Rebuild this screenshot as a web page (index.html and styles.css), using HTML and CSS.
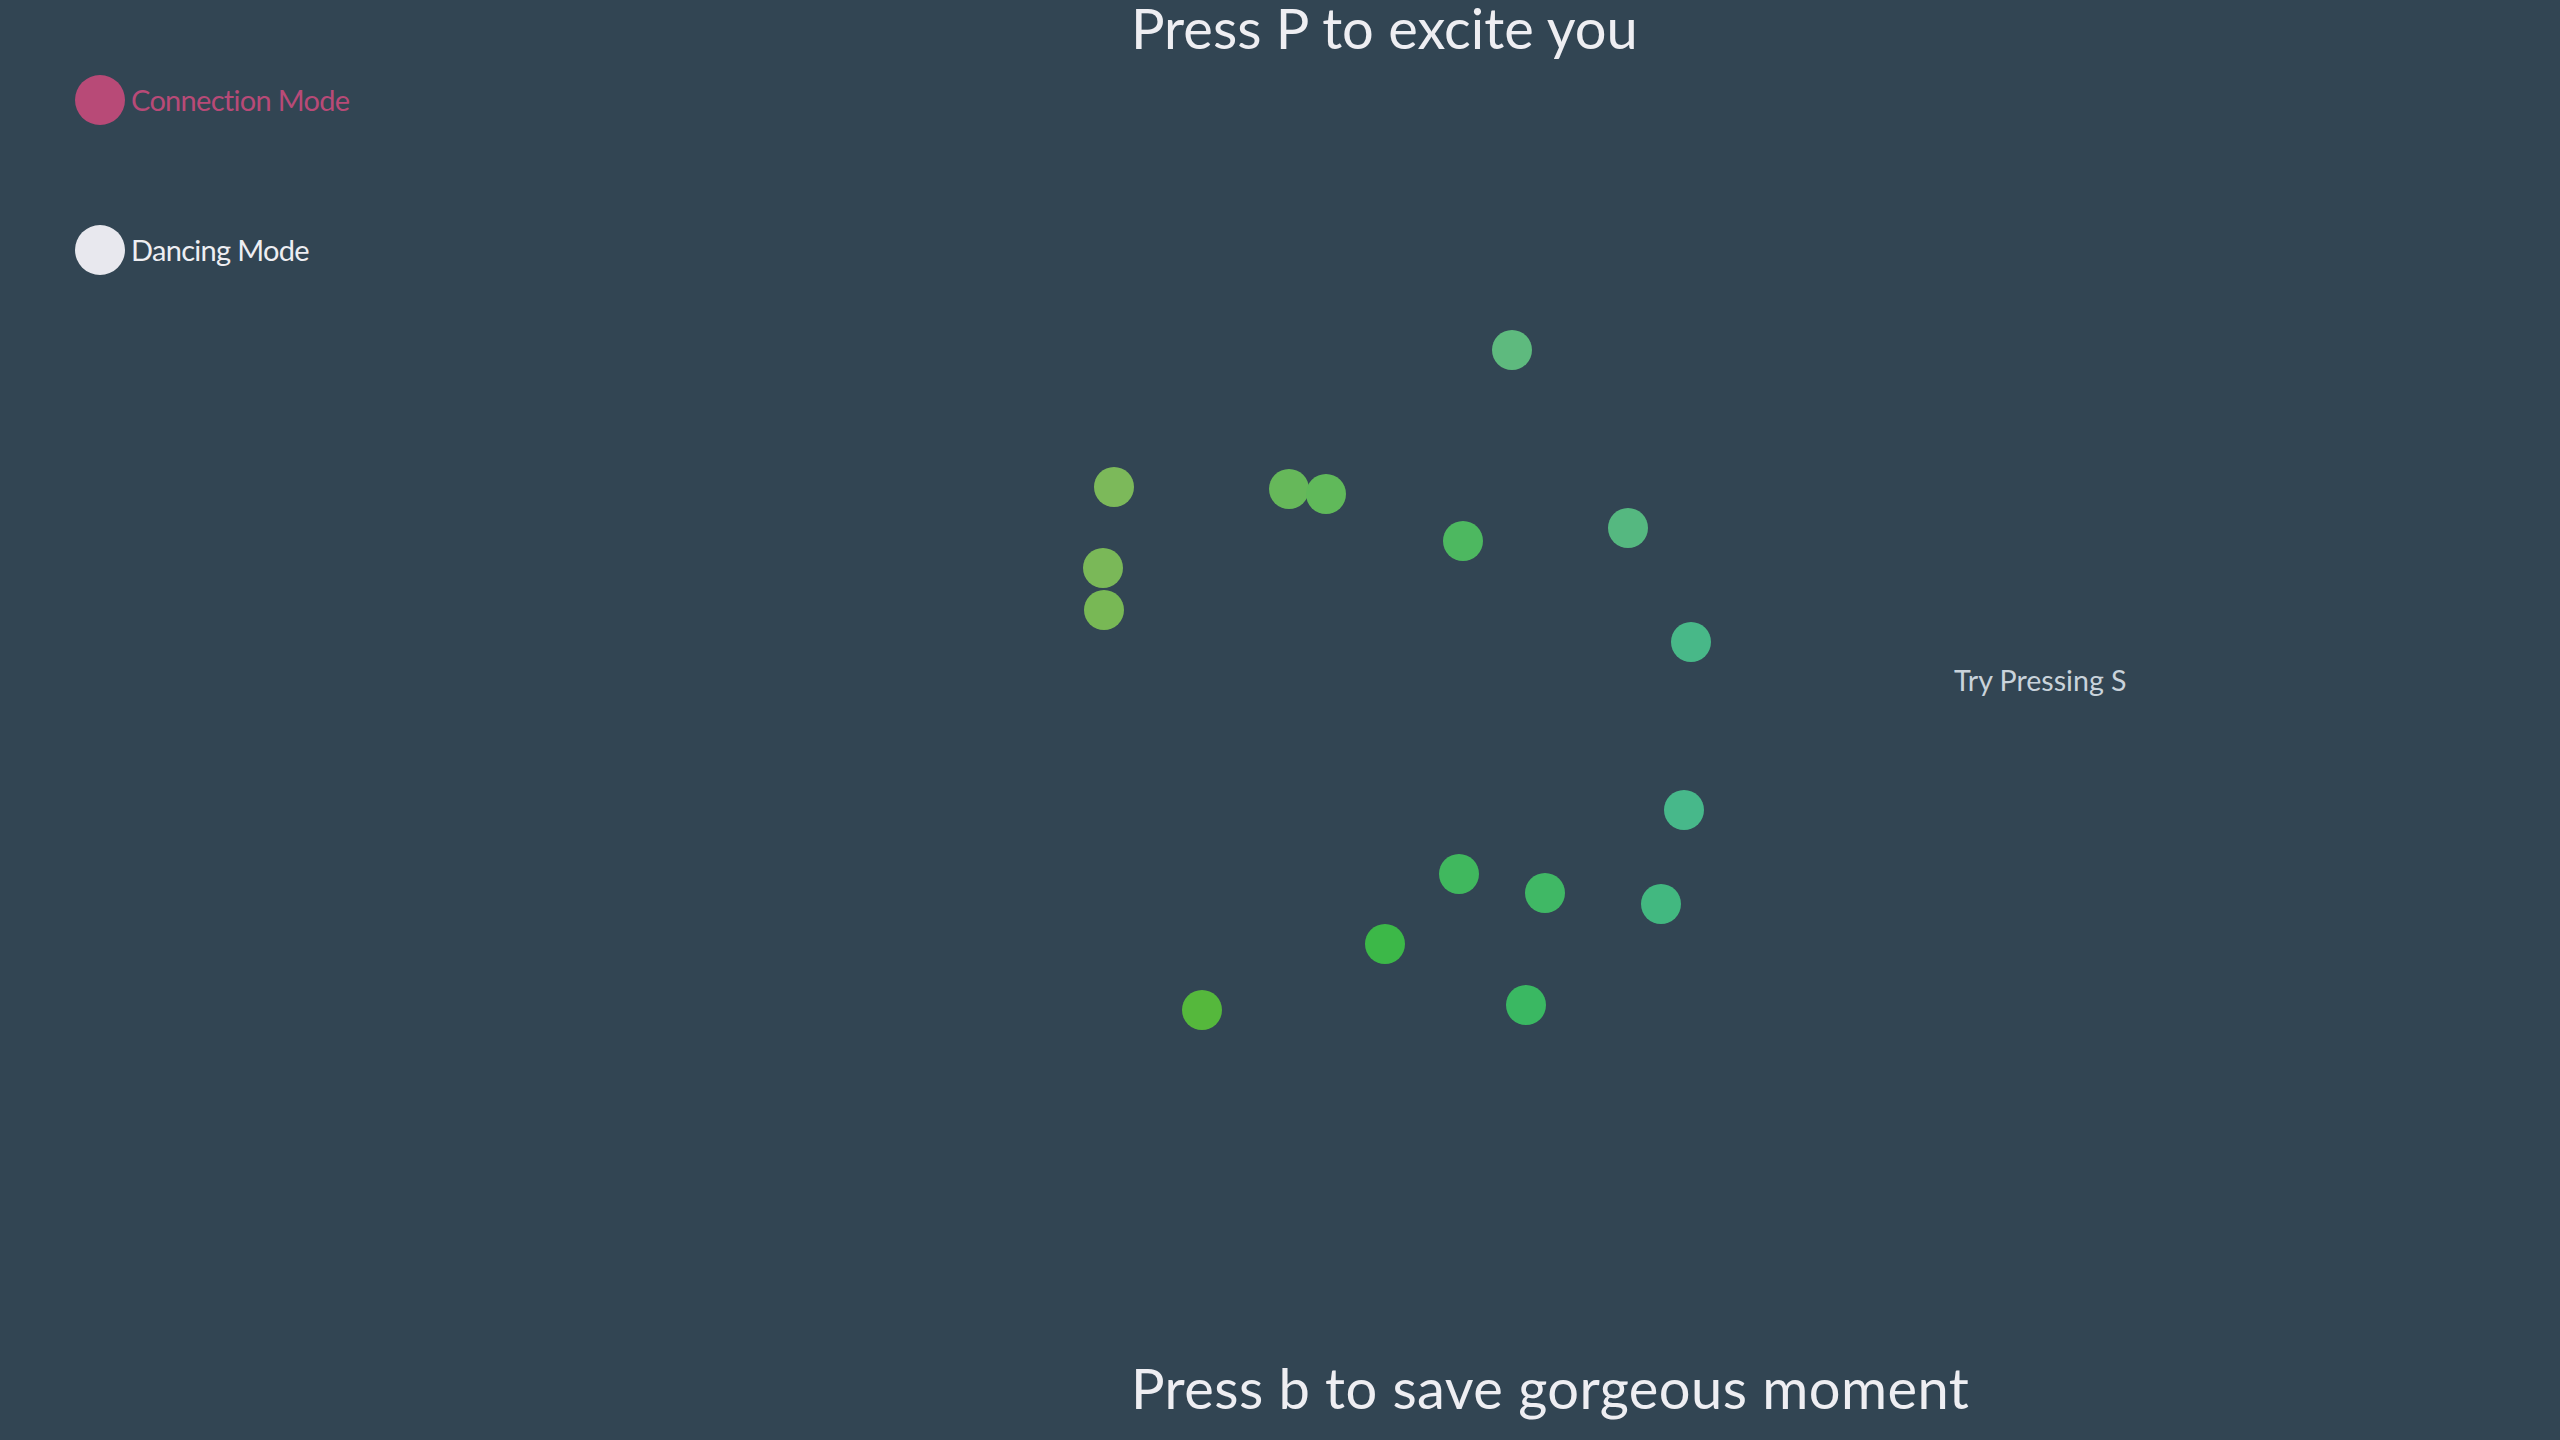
FILE: index.html
```html
<!DOCTYPE html>
<html lang="en">
<head>
<meta charset="utf-8">
<title>Sketch</title>
<link rel="stylesheet" href="styles.css">
</head>
<body>
<main class="stage">
  <ul class="legend">
    <li class="legend-item legend-item--connection"><span class="legend-dot"></span><span class="legend-label">Connection Mode</span></li>
    <li class="legend-item legend-item--dancing"><span class="legend-dot"></span><span class="legend-label">Dancing Mode</span></li>
  </ul>

  <h1 class="caption caption--top">Press P to excite you</h1>
  <p class="hint">Try Pressing S</p>
  <h2 class="caption caption--bottom">Press b to save gorgeous moment</h2>

  <div class="dots">
    <span class="dot" style="left:1492px;top:330px;background:#5eba7e"></span>
    <span class="dot" style="left:1094px;top:467px;background:#7cb95a"></span>
    <span class="dot" style="left:1269px;top:469px;background:#66b85a"></span>
    <span class="dot" style="left:1306px;top:474px;background:#60b95a"></span>
    <span class="dot" style="left:1443px;top:521px;background:#4db860"></span>
    <span class="dot" style="left:1608px;top:508px;background:#55b880"></span>
    <span class="dot" style="left:1083px;top:548px;background:#7ab858"></span>
    <span class="dot" style="left:1084px;top:590px;background:#78b855"></span>
    <span class="dot" style="left:1671px;top:622px;background:#48b888"></span>
    <span class="dot" style="left:1664px;top:790px;background:#47b88a"></span>
    <span class="dot" style="left:1439px;top:854px;background:#40b85e"></span>
    <span class="dot" style="left:1525px;top:873px;background:#40b865"></span>
    <span class="dot" style="left:1641px;top:884px;background:#42b880"></span>
    <span class="dot" style="left:1365px;top:924px;background:#3cb848"></span>
    <span class="dot" style="left:1182px;top:990px;background:#55b83c"></span>
    <span class="dot" style="left:1506px;top:985px;background:#3ab862"></span>
  </div>
</main>
</body>
</html>
```

FILE: styles.css
```css
html, body {
  margin: 0;
  padding: 0;
  background: #324553;
}

body {
  font-family: "Lato", "Open Sans", sans-serif;
  color: #eeeef2;
}

.stage {
  position: relative;
  width: 2560px;
  height: 1440px;
  overflow: hidden;
  background: #324553;
}

.legend {
  position: absolute;
  left: 75px;
  top: 75px;
  margin: 0;
  padding: 0;
  list-style: none;
  display: flex;
  flex-direction: column;
  gap: 100px;
}

.legend-item {
  display: flex;
  align-items: center;
  gap: 6px;
  height: 50px;
  font-size: 29px;
  letter-spacing: -0.7px;
  line-height: 50px;
}

.legend-dot {
  width: 50px;
  height: 50px;
  border-radius: 50%;
  flex: none;
}

.legend-item--connection { color: #b84a77; }
.legend-item--connection .legend-dot { background: #b84a77; }
.legend-item--dancing { color: #eeeef2; }
.legend-item--dancing .legend-dot { background: #e8e8ee; }

.caption {
  position: absolute;
  left: 1131px;
  margin: 0;
  font-weight: 400;
  font-size: 56px;
  line-height: 62px;
  color: #eeeef2;
  white-space: nowrap;
}

.caption--top { top: -3px; }
.caption--bottom { top: 1357px; letter-spacing: 0.45px; }

.hint {
  position: absolute;
  left: 1954px;
  top: 665px;
  margin: 0;
  font-size: 28.6px;
  line-height: 30px;
  color: #c9d3db;
  white-space: nowrap;
}

.dot {
  position: absolute;
  width: 40px;
  height: 40px;
  border-radius: 50%;
}
```
